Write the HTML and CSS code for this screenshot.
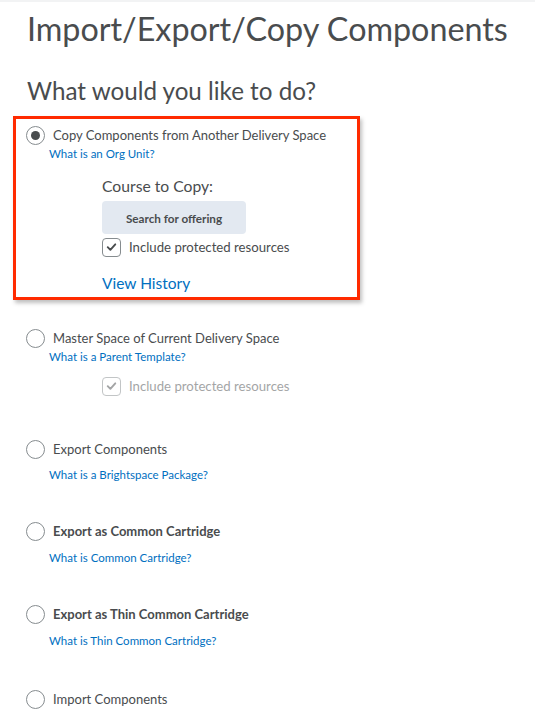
FILE: index.html
```html
<!DOCTYPE html>
<html>
<head>
<meta charset="utf-8">
<link rel="stylesheet" href="styles.css">
</head>
<body>
<div class="topbar"></div>
<main class="page">
  <h1 class="title">Import/Export/Copy Components</h1>
  <h2 class="subtitle">What would you like to do?</h2>

  <section class="option highlighted">
    <div class="opt-row">
      <span class="radio checked"></span>
      <span class="opt-label">Copy Components from Another Delivery Space</span>
    </div>
    <a class="help">What is an Org Unit?</a>
    <div class="sub">
      <div class="sub-heading">Course to Copy:</div>
      <button class="btn">Search for offering</button>
      <label class="check-row">
        <span class="checkbox"><svg viewBox="0 0 18 18" width="18" height="18"><path d="M5 9.2 L7.8 12 L13 6.2" fill="none" stroke="#494c4e" stroke-width="2" stroke-linecap="round" stroke-linejoin="round"/></svg></span>
        <span class="check-label">Include protected resources</span>
      </label>
      <a class="history">View History</a>
    </div>
  </section>

  <section class="option opt-master">
    <div class="opt-row">
      <span class="radio"></span>
      <span class="opt-label">Master Space of Current Delivery Space</span>
    </div>
    <a class="help">What is a Parent Template?</a>
    <div class="sub">
      <label class="check-row disabled">
        <span class="checkbox"><svg viewBox="0 0 18 18" width="18" height="18"><path d="M5 9.2 L7.8 12 L13 6.2" fill="none" stroke="#494c4e" stroke-width="2" stroke-linecap="round" stroke-linejoin="round"/></svg></span>
        <span class="check-label">Include protected resources</span>
      </label>
    </div>
  </section>

  <section class="option opt-export">
    <div class="opt-row">
      <span class="radio"></span>
      <span class="opt-label">Export Components</span>
    </div>
    <a class="help spaced">What is a Brightspace Package?</a>
  </section>

  <section class="option opt-cc">
    <div class="opt-row">
      <span class="radio"></span>
      <span class="opt-label bold">Export as Common Cartridge</span>
    </div>
    <a class="help spaced">What is Common Cartridge?</a>
  </section>

  <section class="option opt-thin">
    <div class="opt-row">
      <span class="radio"></span>
      <span class="opt-label bold">Export as Thin Common Cartridge</span>
    </div>
    <a class="help spaced">What is Thin Common Cartridge?</a>
  </section>

  <section class="option opt-import">
    <div class="opt-row">
      <span class="radio"></span>
      <span class="opt-label">Import Components</span>
    </div>
  </section>
</main>
</body>
</html>
```
FILE: styles.css
```css
* { box-sizing: border-box; }
html, body {
  margin: 0;
  padding: 0;
  background: #fff;
  font-family: Lato, "Open Sans", sans-serif;
  color: #494c4e;
}
.topbar {
  height: 2px;
  background: #f2f3f4;
}
.page {
  padding: 0 0 0 27px;
}
.title {
  margin: 7px 0 0;
  font-size: 32.3px;
  font-weight: 400;
  line-height: 40px;
  color: #494c4e;
}
.subtitle {
  margin: 27px 0 0;
  font-size: 24.2px;
  font-weight: 400;
  line-height: 30px;
  color: #494c4e;
}
.option {
  display: flex;
  flex-direction: column;
  align-items: flex-start;
}
.highlighted {
  margin: 10px 0 0 -14px;
  width: 347px;
  border: 3px solid #ff2a00;
  padding: 6px 0 4px 11px;
  box-shadow: 2px 3px 4px rgba(0,0,0,0.25);
}
.opt-row {
  display: flex;
  align-items: center;
  height: 20px;
}
.radio {
  width: 19px;
  height: 19px;
  border-radius: 50%;
  border: 1px solid #868c8f;
  background: #fff;
  display: flex;
  align-items: center;
  justify-content: center;
  margin-left: -1px;
}
.radio.checked::after {
  content: "";
  width: 9px;
  height: 9px;
  border-radius: 50%;
  background: #494c4e;
}
.opt-label {
  margin-left: 8px;
  font-size: 13px;
  color: #494c4e;
}
.opt-label.bold { font-weight: 700; }
.help {
  margin: 2px 0 0 22px;
  font-size: 11.5px;
  line-height: 14px;
  color: #006fbf;
  text-decoration: none;
}
.help.spaced { margin-top: 10px; }
.sub {
  margin-left: 75px;
  display: flex;
  flex-direction: column;
  align-items: flex-start;
}
.sub-heading {
  margin-top: 15px;
  font-size: 15.7px;
  line-height: 20px;
}
.btn {
  margin-top: 5px;
  width: 144px;
  height: 33px;
  border: none;
  border-radius: 4px;
  background: #e3e9f1;
  font-family: Lato, "Open Sans", sans-serif;
  font-size: 11.7px;
  font-weight: 700;
  color: #494c4e;
  padding: 0;
}
.check-row {
  margin-top: 3px;
  display: flex;
  align-items: center;
  height: 20px;
}
.checkbox {
  width: 19px;
  height: 19px;
  border: 1px solid #868c8f;
  border-radius: 4px;
  display: flex;
  align-items: center;
  justify-content: center;
}
.checkbox svg { display: block; }
.check-label {
  margin-left: 8px;
  font-size: 13.2px;
}
.check-row.disabled { opacity: 0.5; }
.history {
  margin-top: 16px;
  font-size: 15.5px;
  line-height: 20px;
  color: #006fbf;
  text-decoration: none;
}
.opt-master { margin-top: 28px; }
.opt-master .sub .check-row { margin-top: 12px; }
.opt-export { margin-top: 43px; }
.opt-export .help.spaced { margin-top: 9px; }
.opt-cc { margin-top: 39px; }
.opt-thin { margin-top: 39px; }
.opt-import { margin-top: 41px; }
```
